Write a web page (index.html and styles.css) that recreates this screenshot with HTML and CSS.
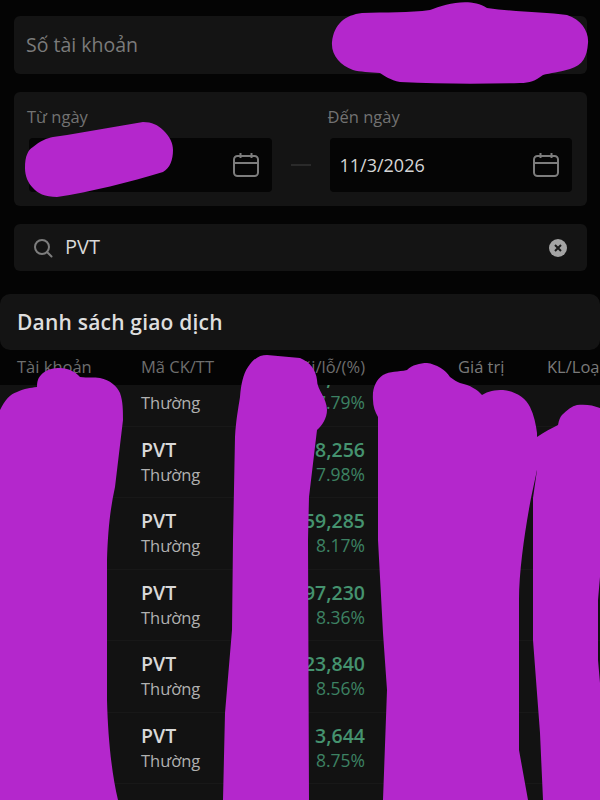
FILE: index.html
```html
<!DOCTYPE html>
<html lang="en">
<head>
  <meta charset="UTF-8">
  <meta name="viewport" content="width=device-width, initial-scale=1.0">
  <title>Danh sách giao dịch</title>
  <link rel="stylesheet" href="styles.css">
</head>
<body>
  <main class="page">
    <div class="card account-field">Số tài khoản</div>

    <div class="card date-range">
      <div class="date-col">
        <label class="date-label">Từ ngày</label>
        <div class="date-input">
          <span class="date-value"></span>
          <svg class="cal-icon" viewBox="0 0 26 26"><use href="#calendar"/></svg>
        </div>
      </div>
      <span class="date-dash"></span>
      <div class="date-col">
        <label class="date-label">Đến ngày</label>
        <div class="date-input">
          <span class="date-value">11/3/2026</span>
          <svg class="cal-icon" viewBox="0 0 26 26"><use href="#calendar"/></svg>
        </div>
      </div>
    </div>

    <div class="card search-field">
      <svg class="search-icon" viewBox="0 0 20 20">
        <circle cx="9" cy="9" r="7"/>
        <path d="M14 14l4.5 4.5"/>
      </svg>
      <span class="search-text">PVT</span>
      <span class="clear-btn">
        <svg viewBox="0 0 10 10"><path d="M2 2l6 6M8 2l-6 6"/></svg>
      </span>
    </div>

    <section class="orders">
      <h2 class="orders-title">Danh sách giao dịch</h2>

      <div class="row table-head">
        <span>Tài khoản</span>
        <span>Mã CK/TT</span>
        <span class="num">Lãi/lỗ/(%)</span>
        <span class="col-value">Giá trị</span>
        <span class="col-volume">KL/Loại</span>
      </div>

      <div class="table-body">
        <ul class="rows">
          <li class="row">
            <span></span>
            <div class="symbol"><strong>PVT</strong><span>Thường</span></div>
            <div class="num pnl"><strong>1,000</strong><span>7.79%</span></div>
          </li>
          <li class="row">
            <span></span>
            <div class="symbol"><strong>PVT</strong><span>Thường</span></div>
            <div class="num pnl"><strong>8,256</strong><span>7.98%</span></div>
          </li>
          <li class="row">
            <span></span>
            <div class="symbol"><strong>PVT</strong><span>Thường</span></div>
            <div class="num pnl"><strong>59,285</strong><span>8.17%</span></div>
          </li>
          <li class="row">
            <span></span>
            <div class="symbol"><strong>PVT</strong><span>Thường</span></div>
            <div class="num pnl"><strong>97,230</strong><span>8.36%</span></div>
          </li>
          <li class="row">
            <span></span>
            <div class="symbol"><strong>PVT</strong><span>Thường</span></div>
            <div class="num pnl"><strong>23,840</strong><span>8.56%</span></div>
          </li>
          <li class="row">
            <span></span>
            <div class="symbol"><strong>PVT</strong><span>Thường</span></div>
            <div class="num pnl"><strong>3,644</strong><span>8.75%</span></div>
          </li>
        </ul>
      </div>
    </section>
  </main>

  <!-- marker strokes painted over private values -->
  <svg class="marker" viewBox="0 0 600 800">
    <path d="M332 42C334 24 345 15 362 13C385 12 410 13 430 10C445 4 470-3 487 8C515 12 545 12 567 15C582 20 589 32 588 43C587 57 583 65 570 69C560 72 550 73 543 75C535 81 530 83 520 83C480 84 440 84 400 82C390 80 385 76 380 73C370 72 360 72 353 70C340 65 331 55 332 42Z"/>
    <path d="M25 168C25 156 28 150 33 147C40 141 47 138 53 137L67 135L143 122C152 122 158 125 163 130C170 137 173 143 173 150C173 160 170 168 163 172C130 182 90 192 57 197C45 197 37 193 33 188C28 183 25 176 25 168Z"/>
    <path d="M0 410C5 400 10 394 17 392C25 388 30 388 37 387C37 378 40 376 43 373C48 369 54 368 60 368C68 368 76 372 80 377C88 378 94 377 100 378C110 380 117 386 120 393C123 402 123 410 123 420L115 487C110 510 108 530 107 560L107 700C108 740 112 775 118 800L0 800Z"/>
    <path d="M235 437C236 420 238 410 240 397C241 385 243 374 248 367C254 358 260 355 267 355L300 358C310 362 316 370 317 380C317 390 327 398 327 410C327 418 322 426 317 430L309 497L308 540L309 800L223 800L225 713L232 630L233 540Z"/>
    <path d="M373 400C372 388 376 380 383 375C390 371 398 372 407 370C412 365 420 363 427 363C436 364 446 370 450 377C454 380 457 382 460 383C470 385 478 390 482 395C488 391 495 390 503 390C515 391 526 398 530 407C534 415 536 425 537 433L537 470L531 498C525 530 519 570 519 600L519 750L528 800L383 800L387 690L383 633L378 540L378 417C375 412 373 406 373 400Z"/>
    <path d="M537 437C544 432 552 428 558 425C559 420 560 417 562 415C567 410 572 406 577 405C585 404 593 405 600 408L600 577L598 600L598 660L600 683L600 800L543 800L540 733L533 640L533 498L537 470Z"/>
  </svg>

  <!-- shared calendar glyph -->
  <svg class="defs" width="0" height="0">
    <symbol id="calendar" viewBox="0 0 26 26">
      <rect x="1" y="4" width="24" height="20" rx="3.5"/>
      <path d="M1 11h24M7.500 1v5M18.500 1v5"/>
    </symbol>
  </svg>
</body>
</html>
```

FILE: styles.css
```css
* {
  box-sizing: border-box;
}
html, body {
  height: 100%;
}
body {
  margin: 0;
  background: #040404;
  color: #e4e4e4;
  font-family: "Open Sans", "Noto Sans", sans-serif;
  overflow: hidden;
  position: relative;
}
.page {
  height: 800px;
  padding-top: 16px;
  display: flex;
  flex-direction: column;
}
.card {
  margin: 0 13px 18px 14px;
  background: #141414;
  border-radius: 6px;
}
.account-field {
  height: 58px;
  padding: 0 0 2px 12px;
  display: flex;
  align-items: center;
  color: #7b7b7b;
  font-size: 19.500px;
}
.date-range {
  height: 114px;
  padding: 14px 15px 14px 15px;
  display: flex;
  align-items: flex-end;
}
.date-col {
  flex: 1;
}
.date-label {
  display: block;
  margin: 0 0 10px -2px;
  color: #727272;
  font-size: 16.500px;
  line-height: 22px;
}
.date-input {
  height: 54px;
  padding: 0 13px 0 10px;
  background: #050505;
  border-radius: 4px;
  display: flex;
  align-items: center;
  justify-content: space-between;
}
.date-value {
  color: #d6d6d6;
  font-size: 18px;
}
.cal-icon {
  width: 26px;
  height: 26px;
  fill: none;
  stroke: #7d7d7d;
  stroke-width: 2;
}
.date-dash {
  width: 20px;
  height: 2px;
  margin: 0 19px 26px 19px;
  background: #2a2a2a;
}
.search-field {
  height: 47px;
  margin-bottom: 23px;
  padding: 0 20px 0 19px;
  display: flex;
  align-items: center;
}
.search-icon {
  width: 20px;
  height: 20px;
  fill: none;
  stroke: #7d7d7d;
  stroke-width: 2;
  stroke-linecap: round;
}
.search-text {
  flex: 1;
  margin: 0 0 2px 12px;
  color: #d8d8d8;
  font-size: 20px;
}
.clear-btn {
  width: 18px;
  height: 18px;
  background: #a4a4a4;
  border-radius: 50%;
  display: flex;
  align-items: center;
  justify-content: center;
}
.clear-btn svg {
  width: 10px;
  height: 10px;
  fill: none;
  stroke: #1a1a1a;
  stroke-width: 2;
}
.orders {
  flex: 1;
  min-height: 0;
  display: flex;
  flex-direction: column;
}
.orders-title {
  margin: 0;
  height: 56px;
  padding-left: 17px;
  background: #141414;
  border-radius: 10px;
  display: flex;
  align-items: center;
  color: #dedede;
  font-size: 21px;
  font-weight: 600;
  letter-spacing: 0.200px;
}
.row {
  display: grid;
  grid-template-columns: 141px 124px 100px 182px 53px;
  white-space: nowrap;
}
.num {
  text-align: right;
}
.table-head {
  height: 35px;
  padding-bottom: 2px;
  align-items: center;
  color: #6e6e6e;
  font-size: 16.500px;
}
.table-head span:first-child {
  padding-left: 17px;
}
.col-value {
  padding-left: 93px;
}
.col-value, .col-volume {
  color: #7a7a7a;
}
.table-body {
  flex: 1;
  min-height: 0;
  overflow: hidden;
  background: #121212;
}
.rows {
  list-style: none;
  margin: -30px 0 0;
  padding: 0;
}
.rows .row {
  height: 71.500px;
  align-items: center;
  border-bottom: 1px solid #181818;
}
.symbol strong, .symbol span, .pnl strong, .pnl span {
  display: block;
}
.symbol strong {
  color: #d8d8d8;
  font-size: 19.500px;
  font-weight: 600;
  line-height: 25px;
}
.symbol span {
  color: #b0b0b0;
  font-size: 16.500px;
  line-height: 25px;
}
.pnl strong {
  color: #45936f;
  font-size: 19.500px;
  font-weight: 600;
  line-height: 25px;
}
.pnl span {
  color: #3d8263;
  font-size: 17.500px;
  line-height: 25px;
}
.marker {
  position: absolute;
  top: 0;
  left: 0;
  width: 600px;
  height: 800px;
  fill: #b427cc;
}
.defs {
  position: absolute;
}
```
